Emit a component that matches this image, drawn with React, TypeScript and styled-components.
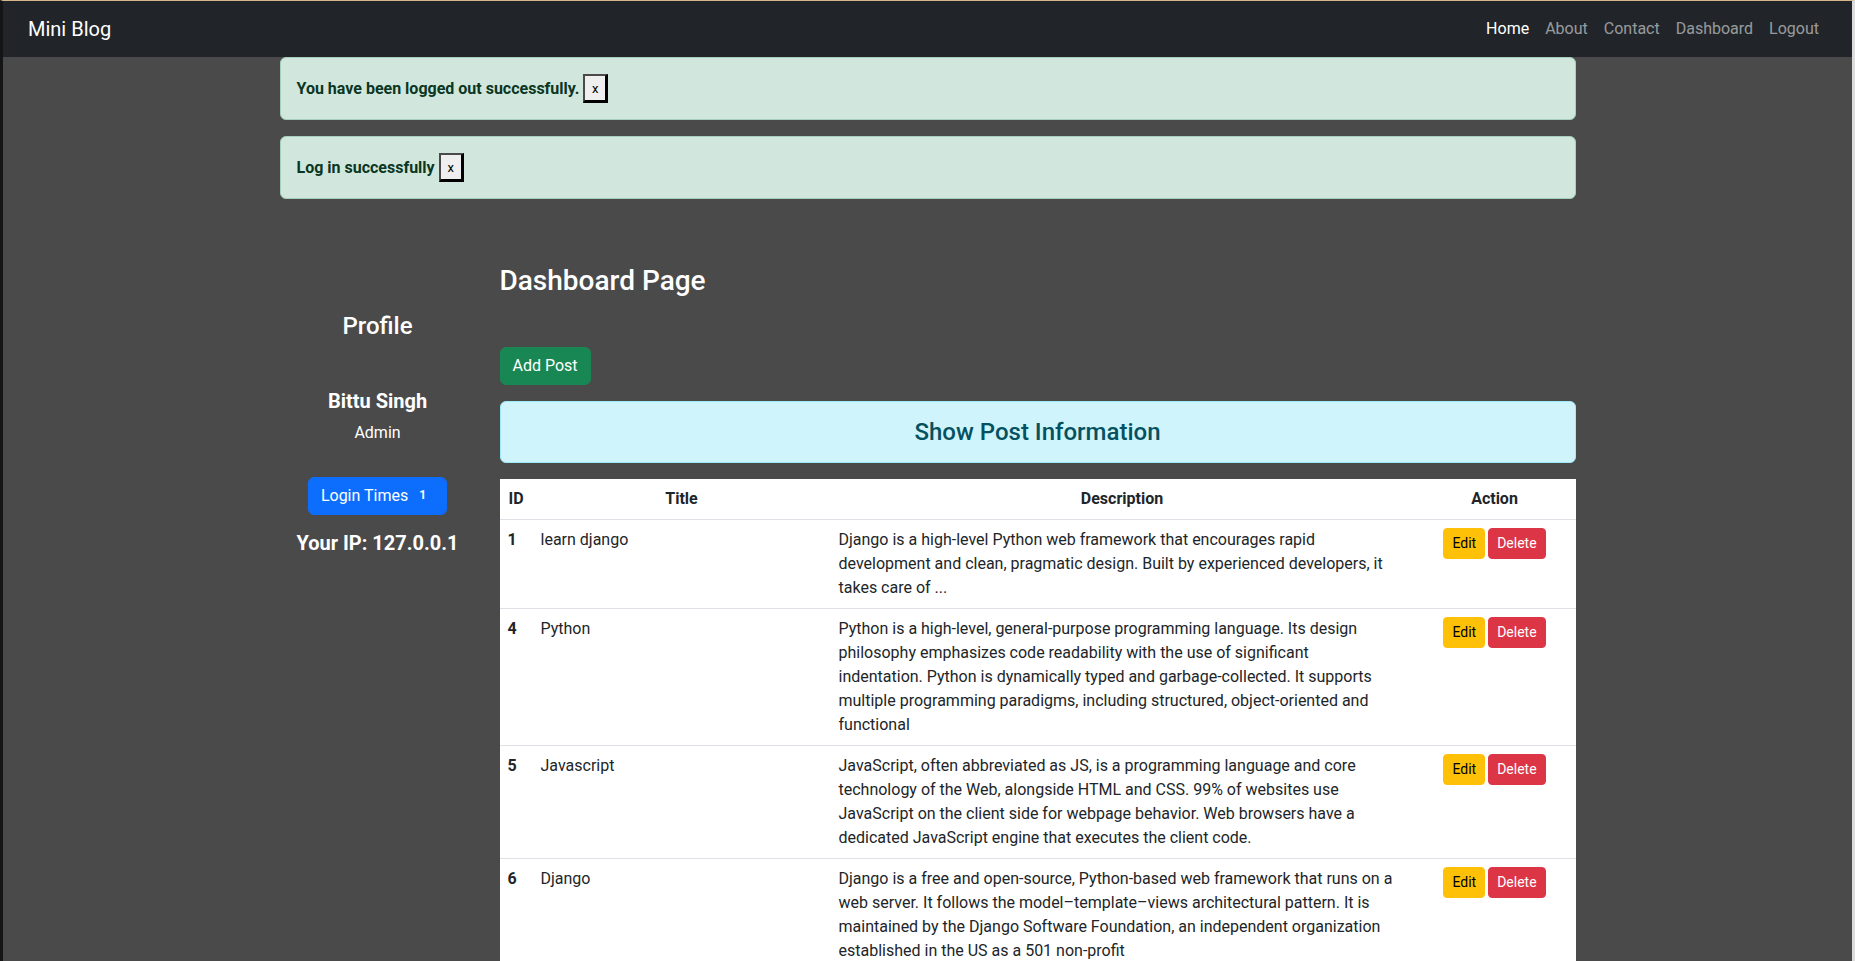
import React from 'react';
import styled, { createGlobalStyle } from 'styled-components';

const GlobalStyle = createGlobalStyle`
  html, body {
    margin: 0;
    background-color: #4a4a4a;
  }
  body {
    font-family: Roboto, 'Liberation Sans', sans-serif;
    font-size: 16px;
    line-height: 1.5;
    color: #212529;
  }
  * {
    box-sizing: border-box;
  }
`;

const Frame = styled.div`
  min-height: 100vh;
  background-color: #4a4a4a;
  border-top: 1px solid #d8b68c;
  border-left: 3px solid #141516;
  border-right: 3px solid #dcdcdc;
`;

const Navbar = styled.nav`
  height: 56px;
  background-color: #212529;
  display: flex;
  align-items: center;
  justify-content: space-between;
  padding: 0 25px;
`;

const Brand = styled.a`
  color: #ffffff;
  font-size: 20px;
  text-decoration: none;
`;

const NavList = styled.div`
  display: flex;
`;

const NavLink = styled.a<{ $active?: boolean }>`
  padding: 8px;
  color: ${(p) => (p.$active ? '#ffffff' : 'rgba(255, 255, 255, 0.55)')};
  text-decoration: none;
`;

const Container = styled.div`
  width: 1296px;
  margin: 0 auto;
`;

const Alert = styled.div`
  display: flex;
  align-items: center;
  padding: 16px;
  margin-bottom: 16px;
  background-color: #d1e7dd;
  border: 1px solid #a3cfbb;
  border-radius: 6px;
  color: #0a3622;
  font-weight: 700;
`;

const CloseButton = styled.button`
  width: 25px;
  height: 29px;
  margin-left: 4px;
  padding: 0;
  background-color: #efefef;
  border-style: solid;
  border-width: 2px 3px 3px 2px;
  border-color: #4a4a4a #000 #000 #4a4a4a;
  font-family: inherit;
  font-size: 13px;
  color: #000;
`;

const MainRow = styled.div`
  display: grid;
  grid-template-columns: 196px 1076px;
  gap: 24px;
  margin-top: 65px;
`;

const ProfileCol = styled.aside`
  text-align: center;
  color: #ffffff;
`;

const ProfileTitle = styled.h4`
  font-size: 24px;
  font-weight: 500;
  line-height: 1.2;
  margin: 48px 0;
`;

const InfoHeading = styled.h5<{ $gap?: number }>`
  font-size: 20px;
  font-weight: 700;
  line-height: 1.2;
  margin: 0 0 ${(p) => p.$gap ?? 8}px;
`;

const Role = styled.p`
  margin: 0 0 32px;
`;

const BtnRow = styled.div`
  display: flex;
  justify-content: center;
  margin-bottom: 16px;
`;

const Button = styled.button<{ $bg: string; $color?: string; $small?: boolean }>`
  display: inline-flex;
  align-items: center;
  padding: ${(p) => (p.$small ? '4px 8px' : '6px 12px')};
  font-family: inherit;
  font-size: ${(p) => (p.$small ? '14px' : '16px')};
  line-height: 1.5;
  color: ${(p) => p.$color ?? '#ffffff'};
  background-color: ${(p) => p.$bg};
  border: 1px solid ${(p) => p.$bg};
  border-radius: ${(p) => (p.$small ? '4px' : '6px')};
  vertical-align: top;
`;

const Badge = styled.span`
  margin-left: 7px;
  padding: 0 8px 0 4px;
  font-size: 12px;
  font-weight: 700;
  line-height: 1;
  position: relative;
  top: -1px;
`;

const ContentCol = styled.section`
  color: #ffffff;
`;

const PageTitle = styled.h3`
  font-size: 28px;
  font-weight: 500;
  line-height: 1.2;
  margin: 0 0 49px;
`;

const AddWrap = styled.div`
  margin-bottom: 16px;
`;

const InfoBox = styled.div`
  padding: 16px;
  margin-bottom: 16px;
  background-color: #cff4fc;
  border: 1px solid #9eeaf9;
  border-radius: 6px;
  color: #055160;
  text-align: center;

  h4 {
    margin: 0;
    font-size: 24px;
    font-weight: 500;
    line-height: 1.2;
  }
`;

const Table = styled.table`
  width: 100%;
  table-layout: fixed;
  border-collapse: collapse;
  background-color: #ffffff;
  color: #212529;
`;

const Th = styled.th`
  padding: 8px;
  text-align: center;
  font-weight: 700;
  border-bottom: 1px solid #dee2e6;
`;

const Td = styled.td<{ $bold?: boolean; $center?: boolean }>`
  padding: 8px;
  vertical-align: top;
  border-bottom: 1px solid #dee2e6;
  font-weight: ${(p) => (p.$bold ? 700 : 400)};
  text-align: ${(p) => (p.$center ? 'center' : 'left')};
`;

const Actions = styled.div`
  display: flex;
  justify-content: center;
  gap: 3px;
`;

const posts = [
  {
    id: 1,
    title: 'learn django',
    desc: [
      'Django is a high-level Python web framework that encourages rapid',
      'development and clean, pragmatic design. Built by experienced developers, it',
      'takes care of ...',
    ],
  },
  {
    id: 4,
    title: 'Python',
    desc: [
      'Python is a high-level, general-purpose programming language. Its design',
      'philosophy emphasizes code readability with the use of significant',
      'indentation. Python is dynamically typed and garbage-collected. It supports',
      'multiple programming paradigms, including structured, object-oriented and',
      'functional',
    ],
  },
  {
    id: 5,
    title: 'Javascript',
    desc: [
      'JavaScript, often abbreviated as JS, is a programming language and core',
      'technology of the Web, alongside HTML and CSS. 99% of websites use',
      'JavaScript on the client side for webpage behavior. Web browsers have a',
      'dedicated JavaScript engine that executes the client code.',
    ],
  },
  {
    id: 6,
    title: 'Django',
    desc: [
      'Django is a free and open-source, Python-based web framework that runs on a',
      'web server. It follows the model\u2013template\u2013views architectural pattern. It is',
      'maintained by the Django Software Foundation, an independent organization',
      'established in the US as a 501 non-profit',
    ],
  },
];

const links = ['Home', 'About', 'Contact', 'Dashboard', 'Logout'];

export default function App() {
  return (
    <Frame>
      <GlobalStyle />
      <Navbar>
        <Brand href="#">Mini Blog</Brand>
        <NavList>
          {links.map((l) => (
            <NavLink key={l} href="#" $active={l === 'Home'}>
              {l}
            </NavLink>
          ))}
        </NavList>
      </Navbar>

      <Container>
        <Alert>
          You have been logged out successfully.
          <CloseButton>x</CloseButton>
        </Alert>
        <Alert>
          Log in successfully
          <CloseButton>x</CloseButton>
        </Alert>

        <MainRow>
          <ProfileCol>
            <ProfileTitle>Profile</ProfileTitle>
            <InfoHeading>Bittu Singh</InfoHeading>
            <Role>Admin</Role>
            <BtnRow>
              <Button $bg="#0d6efd">
                Login Times
                <Badge>1</Badge>
              </Button>
            </BtnRow>
            <InfoHeading $gap={0}>Your IP: 127.0.0.1</InfoHeading>
          </ProfileCol>

          <ContentCol>
            <PageTitle>Dashboard Page</PageTitle>
            <AddWrap>
              <Button $bg="#198754">Add Post</Button>
            </AddWrap>
            <InfoBox>
              <h4>Show Post Information</h4>
            </InfoBox>
            <Table>
              <colgroup>
                <col style={{ width: 33 }} />
                <col style={{ width: 298 }} />
                <col style={{ width: 583 }} />
                <col style={{ width: 162 }} />
              </colgroup>
              <thead>
                <tr>
                  <Th>ID</Th>
                  <Th>Title</Th>
                  <Th>Description</Th>
                  <Th>Action</Th>
                </tr>
              </thead>
              <tbody>
                {posts.map((p) => (
                  <tr key={p.id}>
                    <Td $bold>{p.id}</Td>
                    <Td>{p.title}</Td>
                    <Td>
                      {p.desc.map((line, i) => (
                        <React.Fragment key={i}>
                          {i > 0 && <br />}
                          {line}
                        </React.Fragment>
                      ))}
                    </Td>
                    <Td $center>
                      <Actions>
                        <Button $small $bg="#ffc107" $color="#000000">
                          Edit
                        </Button>
                        <Button $small $bg="#dc3545">
                          Delete
                        </Button>
                      </Actions>
                    </Td>
                  </tr>
                ))}
              </tbody>
            </Table>
          </ContentCol>
        </MainRow>
      </Container>
    </Frame>
  );
}
